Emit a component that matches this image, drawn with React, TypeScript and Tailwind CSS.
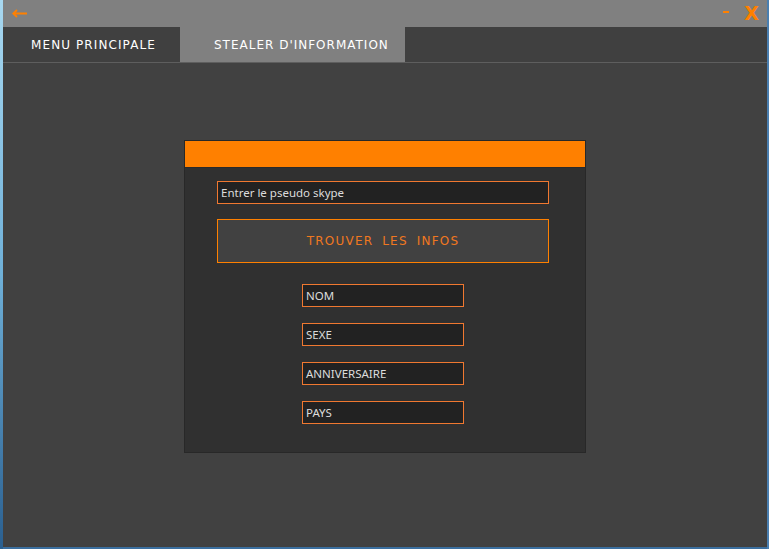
import React from "react";

const field = "h-[23px] border border-[#f07830] bg-[#222222] flex items-center pl-[3px] text-[11.5px] text-[#dcdcdc]";

export default function App() {
  return (
    <div className="w-[769px] h-[549px] flex bg-[#3b6f9f] overflow-hidden" style={{ fontFamily: '"Noto Sans", "Open Sans", sans-serif' }}>
      <div className="w-[3px] h-full bg-gradient-to-b from-[#a8d8f0] via-[#6fb0d8] to-[#2a5f8f]" />
      <div className="flex-1 h-[547px] flex flex-col bg-[#414141]">
        {/* title bar */}
        <div className="h-[27px] bg-[#808080] flex items-center justify-between pl-[9px] pr-[8px]">
          <svg width="15" height="9" viewBox="0 0 15 9">
            <path d="M1 4.5 H15" stroke="#ff8000" strokeWidth="2" />
            <path d="M5 1 L1.2 4.5 L5 8" stroke="#ff8000" strokeWidth="1.8" fill="none" />
          </svg>
          <div className="flex items-center gap-[15px]">
            <div className="w-[6px] h-[2px] bg-[#ff8000] mb-[4px]" />
            <span className="text-[#ff8000] text-[19px] font-bold leading-none" style={{ fontFamily: '"DejaVu Sans", sans-serif' }}>X</span>
          </div>
        </div>
        {/* tabs */}
        <div className="h-[36px] flex bg-[#404040] border-b border-[#5e5e5e]">
          <div className="w-[177px] flex items-center pl-[28px] text-white text-[12px] tracking-[1.1px]" style={{ fontFamily: '"DejaVu Sans", sans-serif' }}>
            MENU PRINCIPALE
          </div>
          <div className="w-[225px] bg-[#808080] flex items-center pl-[34px] text-white text-[12px] tracking-[1px]" style={{ fontFamily: '"DejaVu Sans", sans-serif' }}>
            STEALER D'INFORMATION
          </div>
        </div>
        {/* content */}
        <div className="flex-1 flex justify-center pt-[77px]">
          <div className="w-[402px] h-[313px] bg-[#303030] border border-[#282828] flex flex-col">
            <div className="h-[27px] bg-[#ff8000] border-b border-[#2a2a2a]" />
            <div className="flex flex-col items-start pt-[13px]">
              <div className={`${field} w-[332px] ml-[32px]`}>Entrer le pseudo skype</div>
              <div className="mt-[15px] ml-[32px] w-[332px] h-[44px] border border-[#ff8000] bg-[#414141] flex items-center justify-center text-[#f07820] text-[12px] tracking-[1.2px]" style={{ fontFamily: '"DejaVu Sans", sans-serif', wordSpacing: "4px" }}>
                TROUVER LES INFOS
              </div>
              <div className="mt-[21px] ml-[117px] flex flex-col gap-[16px]">
                <div className={`${field} w-[162px]`}>NOM</div>
                <div className={`${field} w-[162px]`}>SEXE</div>
                <div className={`${field} w-[162px]`}>ANNIVERSAIRE</div>
                <div className={`${field} w-[162px]`}>PAYS</div>
              </div>
            </div>
          </div>
        </div>
      </div>
      <div className="w-[2px] h-full bg-[#4a7fb0]" />
    </div>
  );
}
